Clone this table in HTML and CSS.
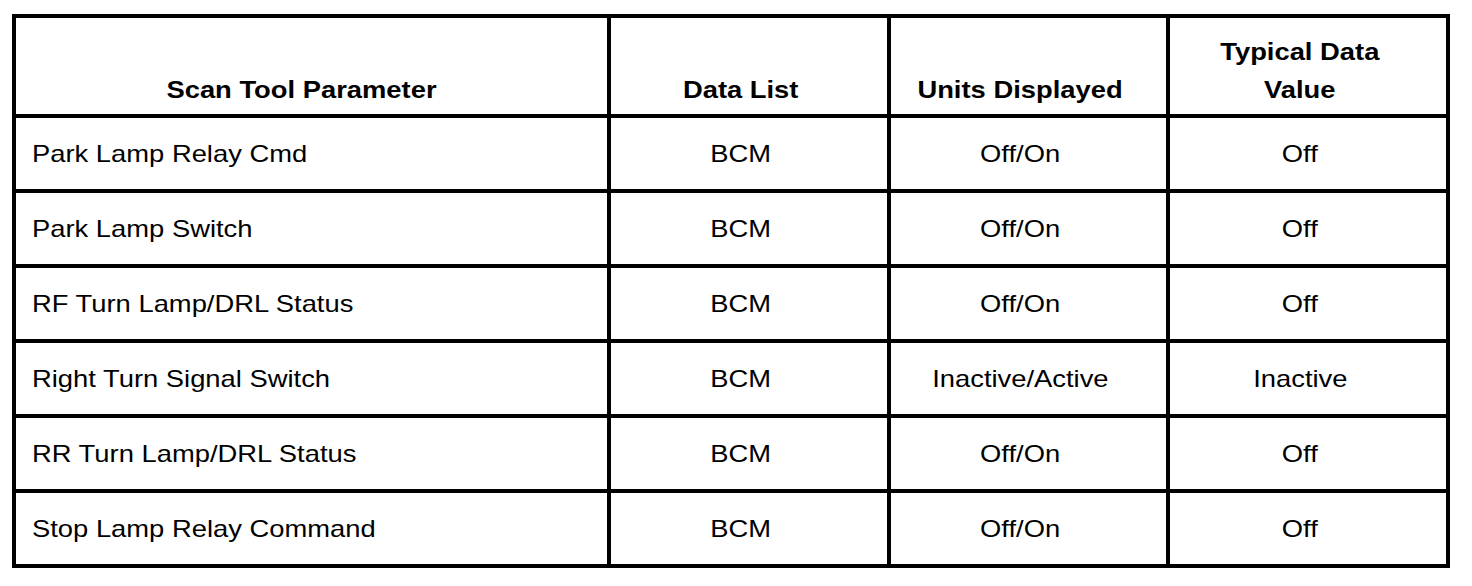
FILE: index.html
```html
<!DOCTYPE html>
<html>
<head>
<meta charset="utf-8">
<link rel="stylesheet" href="styles.css">
</head>
<body>
<div class="table">
  <div class="cell head left-head"><span class="t">Scan Tool Parameter</span></div>
  <div class="cell head"><span class="t">Data List</span></div>
  <div class="cell head"><span class="t">Units Displayed</span></div>
  <div class="cell head"><span class="t">Typical Data<br>Value</span></div>

  <div class="cell first"><span class="t">Park Lamp Relay Cmd</span></div>
  <div class="cell"><span class="t">BCM</span></div>
  <div class="cell"><span class="t">Off/On</span></div>
  <div class="cell"><span class="t">Off</span></div>

  <div class="cell first"><span class="t">Park Lamp Switch</span></div>
  <div class="cell"><span class="t">BCM</span></div>
  <div class="cell"><span class="t">Off/On</span></div>
  <div class="cell"><span class="t">Off</span></div>

  <div class="cell first"><span class="t">RF Turn Lamp/DRL Status</span></div>
  <div class="cell"><span class="t">BCM</span></div>
  <div class="cell"><span class="t">Off/On</span></div>
  <div class="cell"><span class="t">Off</span></div>

  <div class="cell first"><span class="t">Right Turn Signal Switch</span></div>
  <div class="cell"><span class="t">BCM</span></div>
  <div class="cell"><span class="t">Inactive/Active</span></div>
  <div class="cell"><span class="t">Inactive</span></div>

  <div class="cell first"><span class="t">RR Turn Lamp/DRL Status</span></div>
  <div class="cell"><span class="t">BCM</span></div>
  <div class="cell"><span class="t">Off/On</span></div>
  <div class="cell"><span class="t">Off</span></div>

  <div class="cell first"><span class="t">Stop Lamp Relay Command</span></div>
  <div class="cell"><span class="t">BCM</span></div>
  <div class="cell"><span class="t">Off/On</span></div>
  <div class="cell"><span class="t">Off</span></div>
</div>
</body>
</html>
```

FILE: styles.css
```css
html, body {
  margin: 0;
  padding: 0;
  background: #ffffff;
}
body {
  padding: 14px 0 0 12px;
  font-family: "Liberation Sans", Arial, sans-serif;
  color: #000000;
}
.table {
  display: grid;
  grid-template-columns: 591px 276px 275px 276px;
  grid-template-rows: 96px repeat(6, 71px);
  gap: 4px;
  padding: 4px;
  background: #000000;
  width: max-content;
}
.cell {
  background: #ffffff;
  display: flex;
  align-items: center;
  justify-content: center;
  padding: 0 20px 0 4px;
  font-size: 24px;
  line-height: 28px;
}
.cell .t {
  display: inline-block;
  transform: scaleX(1.14);
  transform-origin: center center;
  white-space: nowrap;
  text-align: center;
}
.cell.first {
  justify-content: flex-start;
  padding: 0 0 0 16px;
}
.cell.first .t {
  transform-origin: left center;
  text-align: left;
}
.cell.head {
  align-items: flex-end;
  font-weight: bold;
  line-height: 38px;
  padding-bottom: 5px;
}
.cell.left-head {
  padding-right: 24px;
}
```
